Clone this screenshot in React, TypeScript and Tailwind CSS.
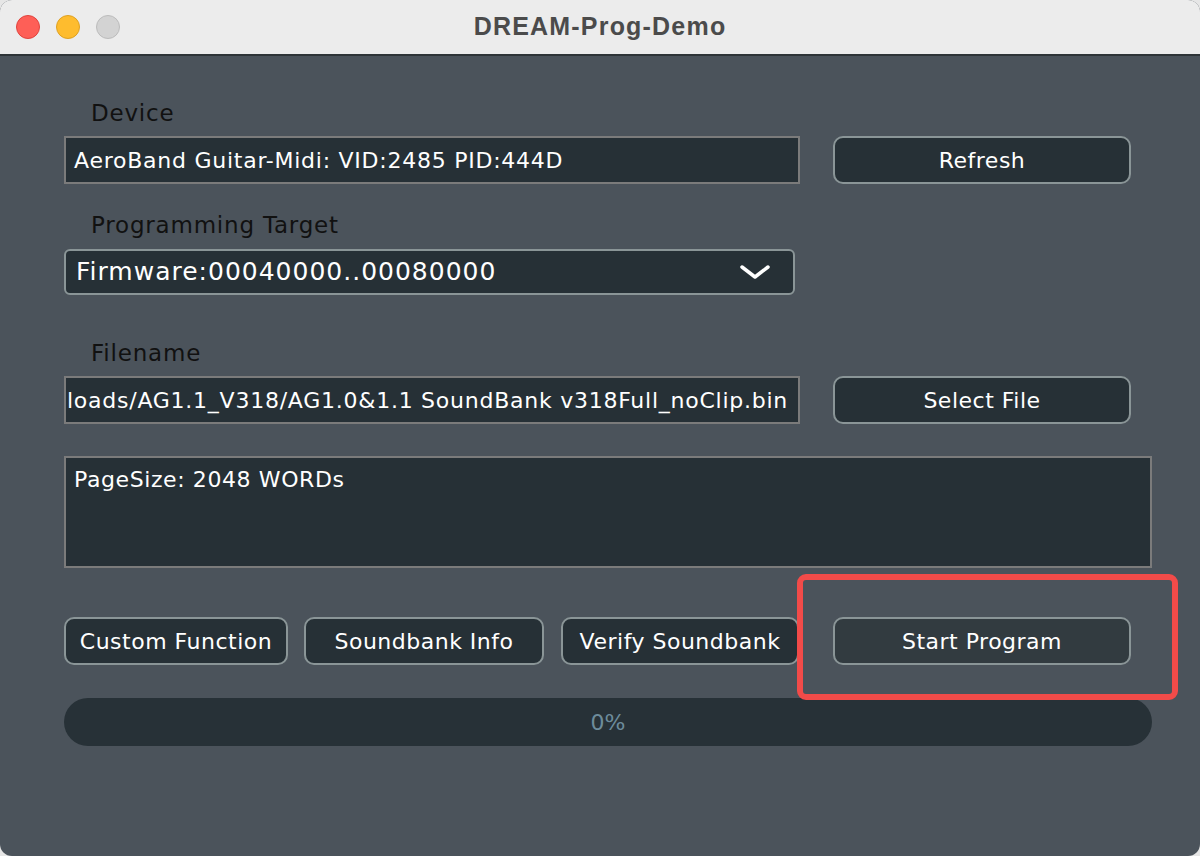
import React from "react";

const font = { fontFamily: '"DejaVu Sans", "Noto Sans", sans-serif' };

function Btn({ label, w, light }: { label: string; w: string; light?: boolean }) {
  return (
    <div
      className={`${w} h-[48px] flex items-center justify-center rounded-[10px] border-2 border-[#8a9597] ${
        light ? "bg-[#323b40]" : "bg-[#263036]"
      } text-white text-[22px] tracking-[0.5px] shrink-0 whitespace-nowrap`}
    >
      {label}
    </div>
  );
}

export default function App() {
  return (
    <div className="w-[1200px] h-[856px] bg-[#e6e6e6]" style={font}>
      <div className="relative w-[1200px] h-[856px] rounded-[12px] overflow-hidden flex flex-col bg-[#4b535b]">
        {/* title bar */}
        <div className="h-[56px] shrink-0 bg-[#ececec] border-b-2 border-[#2e3438] flex items-center relative">
          <div className="flex items-center gap-[16px] pl-[16px]">
            <div className="w-[24px] h-[24px] rounded-full bg-[#fe5f57] border border-[#e0443e]" />
            <div className="w-[24px] h-[24px] rounded-full bg-[#febc2e] border border-[#dea123]" />
            <div className="w-[24px] h-[24px] rounded-full bg-[#d3d3d3] border border-[#bcbcbc]" />
          </div>
          <div
            className="absolute left-0 right-0 top-0 h-[54px] flex items-center justify-center text-[25px] tracking-[1.2px] font-bold text-[#4b4b4b]"
            style={{ fontFamily: '"Liberation Sans", Arial, sans-serif' }}
          >
            DREAM-Prog-Demo
          </div>
        </div>

        {/* body */}
        <div className="flex flex-col pl-[64px]">
          <div className="mt-[45px] h-[24px] leading-[24px] pl-[27px] text-[23px] tracking-[0.8px] text-[#111]">Device</div>
          <div className="mt-[11px] flex items-center gap-[33px]">
            <div className="w-[736px] h-[48px] bg-[#263036] border-2 border-[#7b7b7b] flex items-center pl-[8px] text-white text-[22px] tracking-[0.75px] whitespace-nowrap">
              AeroBand Guitar-Midi: VID:2485 PID:444D
            </div>
            <Btn label="Refresh" w="w-[298px]" />
          </div>

          <div className="mt-[29px] h-[24px] leading-[24px] pl-[27px] text-[23px] tracking-[0.8px] text-[#111]">Programming Target</div>
          <div className="mt-[12px] w-[731px] h-[46px] bg-[#263036] border-2 border-[#8a9597] rounded-[6px] flex items-center justify-between pl-[10px] pr-[22px] text-white text-[25px] tracking-[1px] whitespace-nowrap">
            <span>Firmware:00040000..00080000</span>
            <svg width="32" height="18" viewBox="0 0 32 18">
              <path d="M3 4 L16 14 L29 4" stroke="#ffffff" strokeWidth="3.5" fill="none" strokeLinecap="round" strokeLinejoin="round" />
            </svg>
          </div>

          <div className="mt-[46px] h-[24px] leading-[24px] pl-[27px] text-[23px] tracking-[0.8px] text-[#111]">Filename</div>
          <div className="mt-[11px] flex items-center gap-[33px]">
            <div className="w-[736px] h-[48px] bg-[#263036] border-2 border-[#7b7b7b] flex items-center justify-end pr-[10px] overflow-hidden whitespace-nowrap text-white text-[22px] tracking-[0.75px]">
              C:/Users/Downloads/AG1.1_V318/AG1.0&amp;1.1 SoundBank v318Full_noClip.bin
            </div>
            <Btn label="Select File" w="w-[298px]" />
          </div>

          <div className="mt-[32px] w-[1088px] h-[112px] bg-[#263036] border-2 border-[#7b7b7b] pl-[8px] pt-[9px] text-white text-[22px] tracking-[0.6px] leading-[26px]">
            PageSize: 2048 WORDs
          </div>

          <div className="mt-[49px] flex items-center">
            <Btn label="Custom Function" w="w-[224px]" />
            <div className="w-[16px]" />
            <Btn label="Soundbank Info" w="w-[240px]" />
            <div className="w-[17px]" />
            <Btn label="Verify Soundbank" w="w-[238px]" />
            <div className="w-[34px]" />
            <Btn label="Start Program" w="w-[298px]" light />
          </div>

          <div className="mt-[33px] w-[1088px] h-[48px] rounded-full bg-[#273137] flex items-center justify-center text-[#6d8c9b] text-[22px]">
            0%
          </div>
        </div>

        {/* annotation highlight */}
        <div className="absolute left-[797px] top-[574px] w-[381px] h-[126px] border-[6px] border-[#f24b49] rounded-[9px]" />
      </div>
    </div>
  );
}
